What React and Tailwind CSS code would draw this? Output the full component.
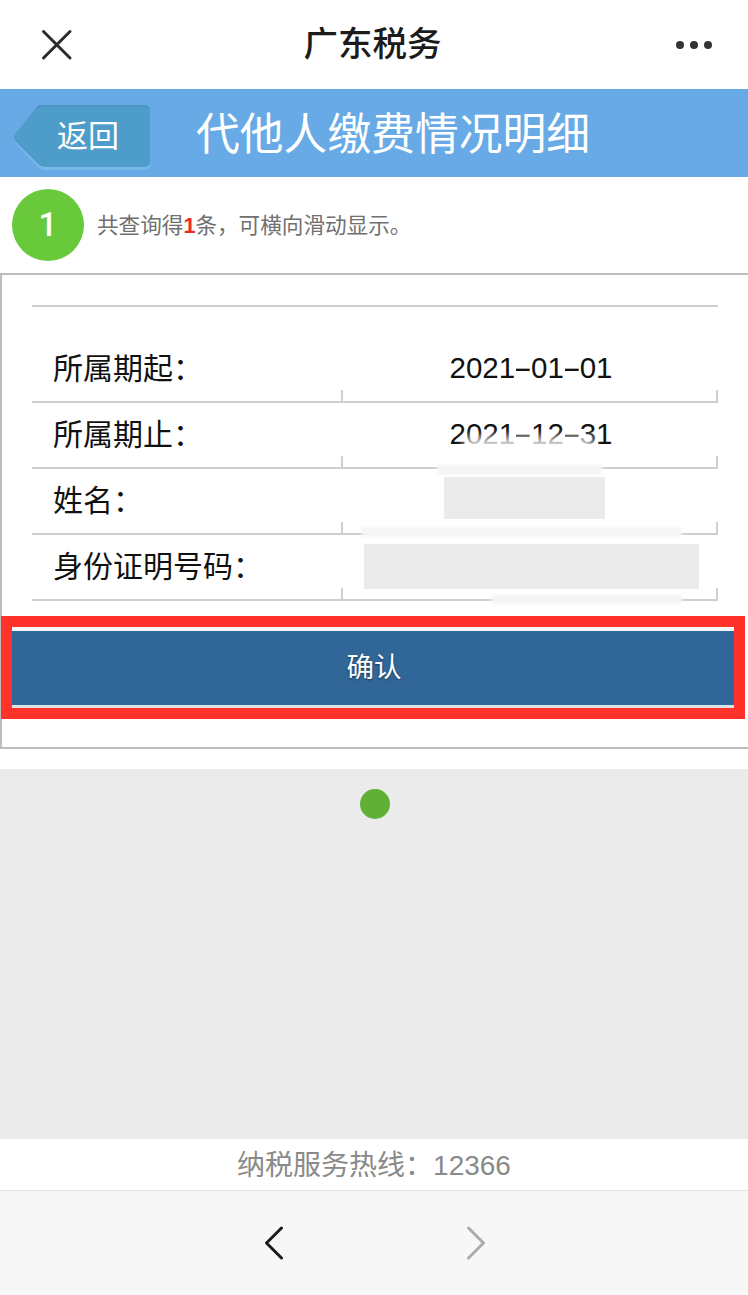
const CJK = "font-['Liberation_Sans','Noto_Sans_CJK_SC',sans-serif]";

function Row({ label, value, h = 'h-[66px]', children }) {
  return (
    <div className={`relative ${h} flex border-b-2 border-[#cfcfcf]`}>
      <div className="w-[309px] pl-[21px] flex items-center text-[30px] leading-none text-[#111]">{label}</div>
      <div className="relative flex-1 flex items-center justify-center text-[29.5px] leading-none text-[#111] pb-[2px]">
        <span className="absolute left-0 bottom-0 w-[2px] h-[11px] bg-[#cfcfcf]" />
        <span className="absolute right-0 bottom-0 w-[2px] h-[11px] bg-[#cfcfcf]" />
        {value}
      </div>
      {children}
    </div>
  );
}

function Dash() {
  return <span className="inline-block scale-x-[1.9] mx-[3px]">-</span>;
}

export default function App() {
  return (
    <div className={`w-[748px] h-[1295px] bg-white flex flex-col overflow-hidden ${CJK}`}>
      {/* top nav */}
      <div className="h-[89px] shrink-0 flex items-center justify-between pl-[41px] pr-[36px]">
        <svg width="32" height="32" viewBox="0 0 32 32" fill="none" stroke="#2b2b2b" strokeWidth="3" strokeLinecap="round">
          <path d="M2.500 2.500 L29 29 M29 2.500 L2.500 29" />
        </svg>
        <div className="text-[34.500px] leading-none font-medium text-[#1b1b1b] mr-[4px]">广东税务</div>
        <div className="flex gap-[6px]">
          <span className="w-[8px] h-[8px] rounded-full bg-[#333]" />
          <span className="w-[8px] h-[8px] rounded-full bg-[#333]" />
          <span className="w-[8px] h-[8px] rounded-full bg-[#333]" />
        </div>
      </div>

      {/* blue header */}
      <div className="h-[88px] shrink-0 bg-[#67aae5] flex items-center pl-[13px]">
        <div className="relative mt-[9px] w-[138px] h-[66px] flex items-center justify-center pl-[12px] pb-[3px] text-[31px] leading-none text-white">
          <svg className="absolute inset-0" width="138" height="66" viewBox="0 0 138 66">
            <path d="M27 1 H131 Q137 1 137 7 V59 Q137 65 131 65 H33 Q28 65 24 61 L2 38 Q0 33 2 29 L23 4 Q25 1 27 1 Z" fill="#7ab8ea" />
            <path d="M27 0 H131 Q137 0 137 6 V56 Q137 62 131 62 H33 Q28 62 24 58 L2 36 Q0 32 2 29 L23 3 Q25 0 27 0 Z" fill="#4e9cc9" />
            <path d="M27 0 H131 Q137 0 137 6 V6 Q136 2 131 2 H28 Q26 2 24 4 L23 3 Q25 0 27 0 Z" fill="#4a95c3" />
          </svg>
          <span className="relative">返回</span>
        </div>
        <div className="ml-[45px] mt-[4px] text-[43.800px] leading-none text-white">代他人缴费情况明细</div>
      </div>

      {/* info row */}
      <div className="h-[96px] shrink-0 flex items-center pl-[12px] pb-[1px]">
        <div className="w-[72px] h-[72px] rounded-full bg-[#68c93b] flex items-center justify-center text-white text-[33px] font-['Roboto'] font-medium">1</div>
        <div className="ml-[13px] mt-[2px] text-[21.600px] leading-none text-[#707070]">
          共查询得<span className="text-[#ee2a24] font-bold">1</span>条，可横向滑动显示。
        </div>
      </div>

      {/* card */}
      <div className="h-[476px] shrink-0 border-l-2 border-y-2 border-[#bdbdbd] flex flex-col">
        <div className="mt-[30px] mx-[30px] border-t-2 border-[#cfcfcf]">
          <div className="h-[30px]" />
          <Row label="所属期起：" value={<span className="ml-[3px]">2021<Dash />01<Dash />01</span>} />
          <Row label="所属期止：" value={<span className="ml-[3px]">2021<Dash />12<Dash />31</span>}>
            <div className="absolute left-[432px] top-[33px] w-[130px] h-[20px] bg-white/80 blur-[4px]" />
          </Row>
          <Row label="姓名：" value={<span className="block w-[161px] h-[42px] bg-[#ebebeb] mt-[-4px] ml-[-11px]" />}>
            <div className="absolute left-[405px] top-[-4px] w-[165px] h-[10px] bg-[#f5f5f5] blur-[1.500px]" />
          </Row>
          <Row label="身份证明号码：" value={<span className="block w-[335px] h-[45px] bg-[#ebebeb] ml-[3px]" />}>
            <div className="absolute left-[330px] top-[-8px] w-[320px] h-[10px] bg-[#f5f5f5] blur-[1.500px]" />
            <div className="absolute left-[460px] top-[60px] w-[190px] h-[9px] bg-[#f5f5f5] blur-[1.500px]" />
          </Row>
        </div>

        {/* highlighted button */}
        <div className="mt-[15px] ml-[-1px] w-[744px] h-[103px] border-[11px] border-[#ff312b]">
          <div className="h-full flex flex-col">
            <div className="h-[4px] bg-[#f4f6f7]" />
            <div className="flex-1 bg-[#316699] border-y border-[#2d6a99] flex items-center justify-center pl-[2px] text-[27.500px] leading-none text-white [text-shadow:0_1px_2px_rgba(0,0,0,0.5)]">确认</div>
            <div className="h-[3px] bg-[#dbe2e6]" />
          </div>
        </div>
      </div>

      <div className="h-[20px] shrink-0" />

      {/* gray area */}
      <div className="h-[370px] shrink-0 bg-[#ebebeb] flex justify-center pt-[20px] pl-[2px]">
        <div className="w-[30px] h-[30px] rounded-full bg-[#5fb034]" />
      </div>

      {/* footer */}
      <div className="h-[51px] shrink-0 flex items-center justify-center pt-[2px] text-[28px] leading-none text-[#8a8a8a]">纳税服务热线：12366</div>

      {/* browser bar */}
      <div className="flex-1 bg-[#f7f7f7] border-t border-[#e3e3e3] flex items-center justify-center gap-[184px] pl-[2px]">
        <svg width="18" height="34" viewBox="0 0 18 34" fill="none" stroke="#1a1a1a" strokeWidth="3" strokeLinecap="round" strokeLinejoin="round">
          <path d="M16.500 2 L1.500 17 L16.500 32" />
        </svg>
        <svg width="18" height="34" viewBox="0 0 18 34" fill="none" stroke="#ababab" strokeWidth="3" strokeLinecap="round" strokeLinejoin="round">
          <path d="M1.500 2 L16.500 17 L1.500 32" />
        </svg>
      </div>
    </div>
  );
}
